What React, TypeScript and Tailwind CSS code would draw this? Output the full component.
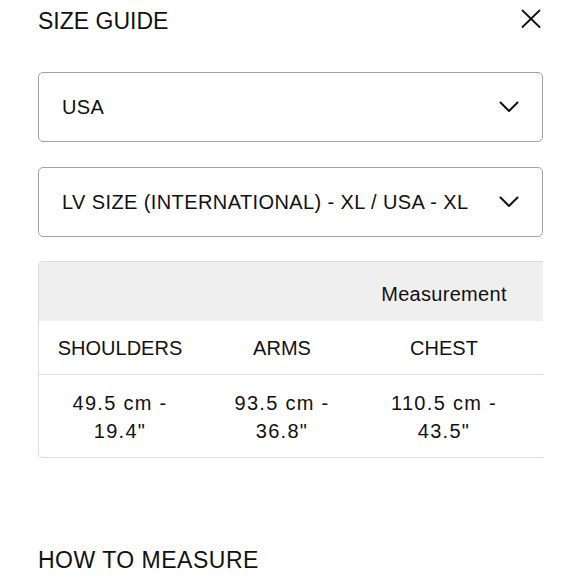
import React from 'react';

const rows = [
  { label: 'SHOULDERS', cm: '49.5 cm -', inch: '19.4"' },
  { label: 'ARMS', cm: '93.5 cm -', inch: '36.8"' },
  { label: 'CHEST', cm: '110.5 cm -', inch: '43.5"' },
];

const Chevron = () => (
  <svg width="20" height="12" viewBox="0 0 20 12" fill="none" stroke="#111" strokeWidth="2" strokeLinecap="round" strokeLinejoin="round">
    <polyline points="1.5,1.5 10,10 18.5,1.5" />
  </svg>
);

const Select = ({ value }: { value: string }) => (
  <div className="h-[70px] border border-[#a3a3a3] rounded-[5px] flex items-center justify-between pl-[23px] pr-[23px]">
    <span className="text-[20px] leading-[28px] tracking-[0.4px]">{value}</span>
    <Chevron />
  </div>
);

export default function App() {
  return (
    <div
      className="w-[580px] h-[580px] overflow-hidden bg-white text-[#111] px-[37px] pl-[38px]"
      style={{ fontFamily: '"Liberation Sans", Arial, sans-serif' }}
    >
      <div className="h-[42px] flex justify-between items-start">
        <h1 className="text-[23px] leading-[42px] font-normal">SIZE GUIDE</h1>
        <button className="mt-[9px] mr-[2px]">
          <svg width="20" height="20" viewBox="0 0 20 20" fill="none" stroke="#111" strokeWidth="1.8" strokeLinecap="round">
            <line x1="1.5" y1="1.5" x2="18.5" y2="18" />
            <line x1="18.5" y1="1.5" x2="1.5" y2="18" />
          </svg>
        </button>
      </div>

      <div className="mt-[30px] flex flex-col gap-[25px]">
        <Select value="USA" />
        <Select value="LV SIZE (INTERNATIONAL) - XL / USA - XL" />
      </div>

      <div className="mt-[24px] border border-r-0 border-[#dcdcdc] rounded-l-[5px] overflow-hidden">
        <div className="w-[650px]">
          <div className="grid grid-cols-[162px_162px_162px_164px] h-[59px] bg-[#efefef] items-center">
            <div />
            <div />
            <div className="text-center text-[20px] tracking-[0.3px] pt-[4px]">Measurement</div>
            <div />
          </div>
          <div className="grid grid-cols-[162px_162px_162px_164px] h-[54px] items-center border-b border-[#dcdcdc]">
            {rows.map((r) => (
              <div key={r.label} className="text-center text-[20px] pt-[1px]">
                {r.label}
              </div>
            ))}
            <div />
          </div>
          <div className="grid grid-cols-[162px_162px_162px_164px] h-[82px] items-center">
            {rows.map((r) => (
              <div key={r.label} className="text-center text-[20px] leading-[28px] tracking-[1.3px] pt-[2px]">
                {r.cm}
                <br />
                {r.inch}
              </div>
            ))}
            <div />
          </div>
        </div>
      </div>

      <h2 className="mt-[87px] text-[23px] leading-[30px] font-normal tracking-[0.5px]">HOW TO MEASURE</h2>
    </div>
  );
}
